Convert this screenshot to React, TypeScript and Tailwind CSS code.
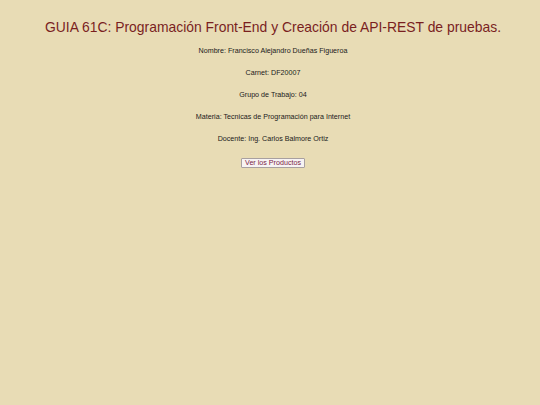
import React from 'react';

const datos = [
  'Nombre: Francisco Alejandro Dueñas Figueroa',
  'Carnet: DF20007',
  'Grupo de Trabajo: 04',
  'Materia: Tecnicas de Programación para Internet',
  'Docente: Ing. Carlos Balmore Ortiz',
];

export default function App() {
  return (
    <div
      className="min-h-[405px] w-full bg-[#e8dcb5] pl-[6px] flex flex-col items-center text-center"
      style={{ fontFamily: '"Liberation Sans", Arial, sans-serif' }}
    >
      <h1 className="mt-[19px] text-[13.9px] leading-[16px] text-[#7a1f1f]">
        GUIA 61C: Programación Front-End y Creación de API-REST de pruebas.
      </h1>
      <div className="mt-[12px] flex flex-col items-center gap-[14px]">
        {datos.map((d) => (
          <p key={d} className="text-[7.15px] leading-[8px] text-[#1a1a1a]">
            {d}
          </p>
        ))}
      </div>
      <button className="mt-[15px] bg-[#f7f3f3] border border-[#a8a0a0] rounded-[1px] px-[3px] text-[7.15px] leading-[8px] text-[#7a2347]">
        Ver los Productos
      </button>
    </div>
  );
}
